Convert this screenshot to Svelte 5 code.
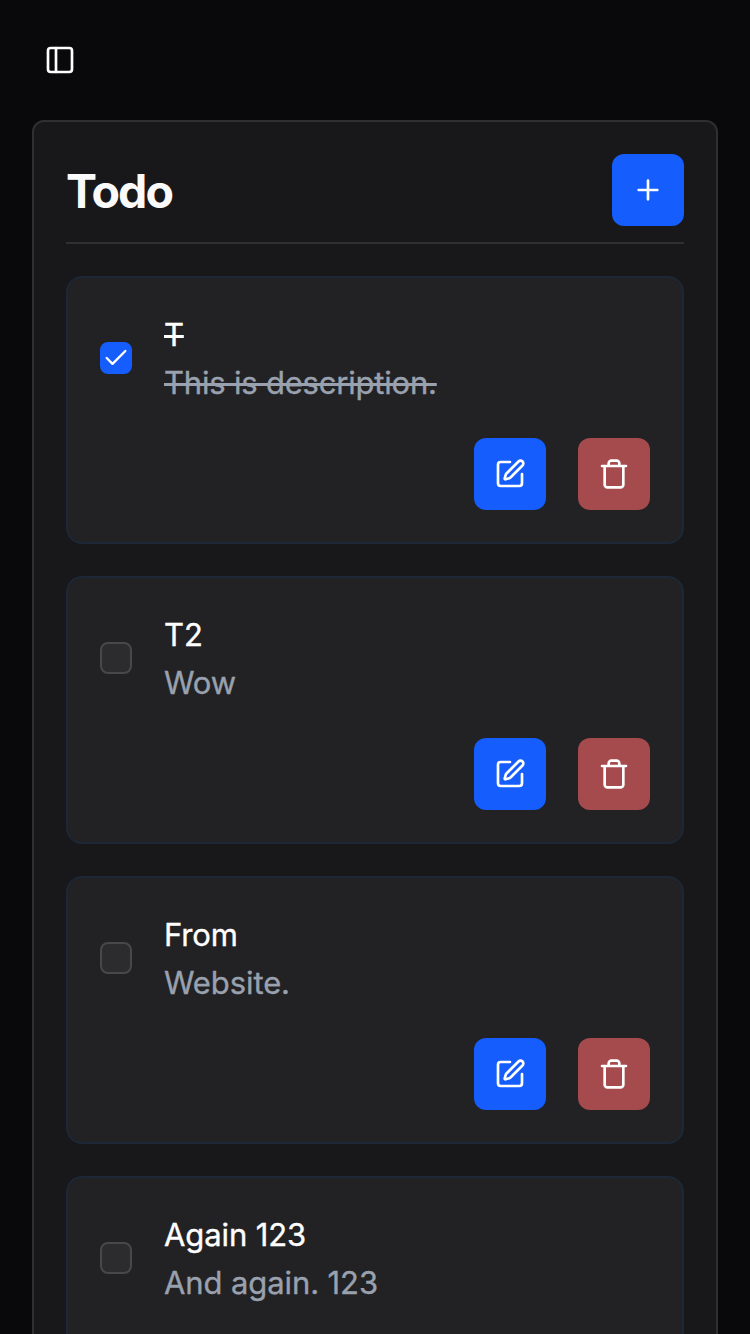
<script>
  let todos = $state([
    { title: 'T', description: 'This is description.', done: true },
    { title: 'T2', description: 'Wow', done: false },
    { title: 'From', description: 'Website.', done: false },
    { title: 'Again 123', description: 'And again. 123', done: false }
  ]);
</script>

<div class="app">
  <header>
    <button class="toggle" aria-label="Toggle sidebar">
      <svg viewBox="0 0 24 24"><rect width="18" height="18" x="3" y="3" rx="2" /><path d="M9 3v18" /></svg>
    </button>
  </header>
  <main class="panel">
    <div class="heading">
      <h1>Todo</h1>
      <button class="btn" aria-label="Add">
        <svg viewBox="0 0 24 24"><path d="M5 12h14M12 5v14" /></svg>
      </button>
    </div>
    <div class="list">
      {#each todos as todo}
        <article class="card">
          <div class="row">
            <button
              class="check"
              class:checked={todo.done}
              role="checkbox"
              aria-checked={todo.done}
              aria-label={todo.title}
              onclick={() => (todo.done = !todo.done)}
            >
              {#if todo.done}
                <svg viewBox="0 0 24 24"><path d="M20 6 9 17l-5-5" /></svg>
              {/if}
            </button>
            <div class="text" class:done={todo.done}>
              <p class="title">{todo.title}</p>
              <p class="desc">{todo.description}</p>
            </div>
          </div>
          <div class="actions">
            <button class="btn" aria-label="Edit">
              <svg viewBox="0 0 24 24">
                <path d="M12 3H5a2 2 0 0 0-2 2v14a2 2 0 0 0 2 2h14a2 2 0 0 0 2-2v-7" />
                <path d="M18.375 2.625a1 1 0 0 1 3 3l-9.013 9.014a2 2 0 0 1-.853.505l-2.873.84a.5.5 0 0 1-.62-.62l.84-2.873a2 2 0 0 1 .506-.852z" />
              </svg>
            </button>
            <button class="btn danger" aria-label="Delete">
              <svg viewBox="0 0 24 24">
                <path d="M3 6h18M19 6v14c0 1-1 2-2 2H7c-1 0-2-1-2-2V6M8 6V4c0-1 1-2 2-2h4c1 0 2 1 2 2v2" />
              </svg>
            </button>
          </div>
        </article>
      {/each}
    </div>
  </main>
</div>

<style>
  :global(body) {
    margin: 0;
    background: #09090b;
  }
  .app {
    box-sizing: border-box;
    height: 1334px;
    overflow: hidden;
    padding: 0 32px;
    background: #09090b;
    color: #fafafa;
    font-family: Inter, "Liberation Sans", sans-serif;
  }
  button {
    display: flex;
    align-items: center;
    justify-content: center;
    box-sizing: border-box;
    padding: 0;
    border: 0;
    background: none;
    color: #fff;
  }
  svg {
    width: 32px;
    height: 32px;
    flex: none;
    fill: none;
    stroke: currentColor;
    stroke-width: 2;
    stroke-linecap: round;
    stroke-linejoin: round;
  }
  header {
    display: flex;
    align-items: center;
    height: 120px;
  }
  .toggle {
    width: 56px;
    height: 56px;
  }
  .panel {
    box-sizing: border-box;
    width: 686px;
    padding: 32px;
    border: 2px solid #2f2f31;
    border-radius: 12px;
    background: #18181a;
  }
  .heading {
    display: flex;
    align-items: center;
    justify-content: space-between;
    padding-bottom: 16px;
    border-bottom: 2px solid #2f2f31;
  }
  h1 {
    margin: 0;
    padding-top: 2px;
    font-size: 46.5px;
    line-height: 70px;
    font-weight: 700;
    letter-spacing: -1.95px;
  }
  .btn {
    width: 72px;
    height: 72px;
    border-radius: 12px;
    background: #155dfc;
  }
  .danger {
    background: #a54a4d;
  }
  .list {
    display: flex;
    flex-direction: column;
    gap: 32px;
    margin-top: 32px;
  }
  .card {
    display: flex;
    flex-direction: column;
    justify-content: space-between;
    box-sizing: border-box;
    height: 268px;
    padding: 32px;
    border: 2px solid #1c2838;
    border-radius: 16px;
    background: #222224;
  }
  .row {
    display: flex;
    align-items: center;
    gap: 32px;
  }
  .check {
    width: 32px;
    height: 32px;
    border: 2px solid #48484a;
    border-radius: 8px;
    background: #2c2c2e;
  }
  .checked {
    border-color: #155dfc;
    background: #155dfc;
  }
  .check svg {
    width: 28px;
    height: 28px;
  }
  .text {
    padding-top: 1px;
    margin-bottom: -1px;
    font-size: 31px;
    line-height: 48px;
    font-weight: 400;
    letter-spacing: -0.1px;
    -webkit-text-stroke: 0.35px currentColor;
  }
  p {
    margin: 0;
  }
  .title {
    color: #fff;
  }
  .desc {
    color: #99a1af;
  }
  .done {
    letter-spacing: -0.2px;
  }
  .done p {
    text-decoration: line-through;
    text-decoration-thickness: 3px;
  }
  .actions {
    display: flex;
    justify-content: flex-end;
    gap: 32px;
  }
</style>
